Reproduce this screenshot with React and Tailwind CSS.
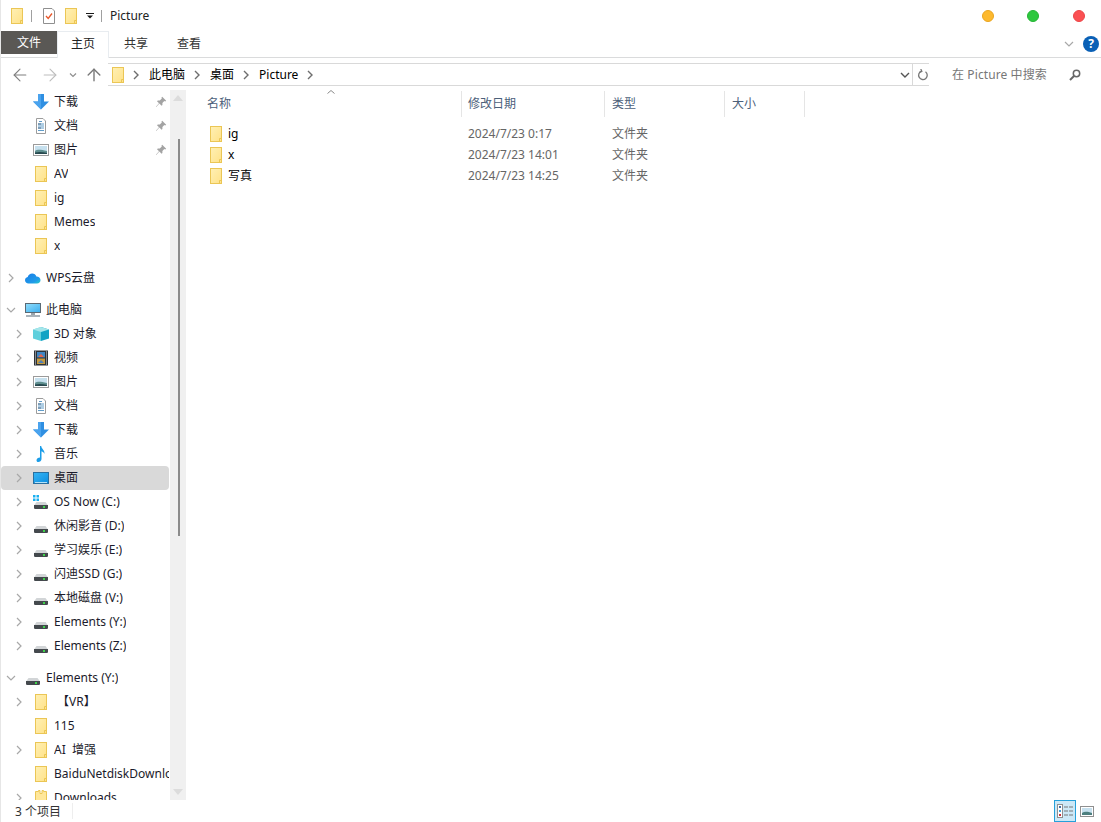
import React from 'react';
import { ArrowLeft, ArrowRight, ArrowUp } from 'lucide-react';

function Folder() {
  return (
    <svg width="12" height="16" viewBox="0 0 12 16" className="shrink-0">
      <defs>
        <linearGradient id="folderFill" x1="0" y1="0" x2="1" y2="1">
          <stop offset="0" stopColor="#fff0b4" />
          <stop offset="1" stopColor="#ffe289" />
        </linearGradient>
      </defs>
      <rect x="0.5" y="0.5" width="11" height="15" fill="url(#folderFill)" stroke="#ebc655" />
      <path d="M9.5 15.5V12.5H11.5" fill="none" stroke="#ebc655" />
    </svg>
  );
}

function OpenFolder() {
  return (
    <svg width="12" height="16" viewBox="0 0 12 16" className="shrink-0">
      <path d="M0.5 15.5V1.5H3.5V0.5H5V3.5H7V0.5H8.5V1.5H11.5V15.5Z" fill="#ffe79a" stroke="#ebc655" />
    </svg>
  );
}

function Chevron({ open, dark }) {
  return (
    <svg width="10" height="10" viewBox="0 0 10 10" fill="none" stroke={dark ? '#6e6e6e' : '#a8a8a8'} strokeWidth={dark ? 1.4 : 1.2}>
      <path d={open ? 'M1 3L5 7L9 3' : 'M3 1L7 5L3 9'} />
    </svg>
  );
}

function Pin() {
  return (
    <svg width="12" height="12" viewBox="0 0 12 12" fill="#a3a3a3">
      <path d="M7.2 0.8L11.2 4.8L10.2 5.4L9.3 5.1L7.4 7L7.4 9L6.6 9.8L4.4 7.6L1.2 11L0.9 10.7L4 7.2L2 5.2L2.8 4.4L4.8 4.4L6.8 2.5L6.5 1.6Z" />
    </svg>
  );
}

function DownloadIcon() {
  return (
    <svg width="16" height="16" viewBox="0 0 16 16">
      <path d="M5 0H11V7.5H16L8 15.5L0 7.5H5Z" fill="#2f8fe2" />
      <path d="M5 0H8V15.5L0 7.5H5Z" fill="#4aa3ee" />
    </svg>
  );
}

function DocIcon() {
  return (
    <svg width="16" height="16" viewBox="0 0 16 16" fill="none">
      <path d="M3.5 0.5H10L12.5 3V15.5H3.5Z" fill="#fff" stroke="#9c9c9c" />
      <path d="M6 3.5H9M5 6H11M5 8H11M5 10H11M5 12.5H11" stroke="#5f9cc9" />
      <path d="M5 6H8M5 10H8" stroke="#4d6f8c" />
    </svg>
  );
}

function PictureIcon() {
  return (
    <svg width="16" height="16" viewBox="0 0 16 16">
      <rect x="0.5" y="2.5" width="15" height="11" fill="#fff" stroke="#9b9b9b" />
      <rect x="2" y="4" width="12" height="8" fill="#c6e0ee" />
      <path d="M2 9C5 7 8 8 14 9V12H2Z" fill="#5f8f8f" />
      <path d="M2 10.5C6 9.5 10 10 14 11V12H2Z" fill="#27494f" />
    </svg>
  );
}

function CloudIcon() {
  return (
    <svg width="16" height="16" viewBox="0 0 16 16">
      <defs>
        <linearGradient id="cloudFill" x1="0" y1="0" x2="1" y2="1">
          <stop offset="0" stopColor="#1a7de8" />
          <stop offset="0.7" stopColor="#1f9be8" />
          <stop offset="1" stopColor="#2ad0c8" />
        </linearGradient>
      </defs>
      <path d="M3.5 13.5C1.5 13.5 0 12 0 10.2C0 8.5 1.2 7.3 2.7 7C3.3 4.8 5.2 3.5 7.2 3.5C9.2 3.5 10.8 4.8 11.4 6.4C13.8 6.4 15.5 8 15.5 10C15.5 12 14 13.5 12 13.5Z" fill="url(#cloudFill)" />
    </svg>
  );
}

function PcIcon() {
  return (
    <svg width="16" height="16" viewBox="0 0 16 16">
      <defs>
        <linearGradient id="pcFill" x1="0" y1="0" x2="1" y2="1">
          <stop offset="0" stopColor="#8fdcfb" />
          <stop offset="1" stopColor="#3fb0ef" />
        </linearGradient>
      </defs>
      <rect x="0" y="1" width="16" height="10" fill="#5a6a75" />
      <rect x="1" y="2" width="14" height="8" fill="url(#pcFill)" />
      <rect x="6" y="11" width="4" height="2" fill="#9aa5ad" />
      <rect x="1" y="13" width="14" height="2" fill="#aab3ba" />
    </svg>
  );
}

function CubeIcon() {
  return (
    <svg width="16" height="16" viewBox="0 0 16 16">
      <path d="M8 1L16 3.5V12.5L8 15Z" fill="#12a3c4" />
      <path d="M8 1L0 3.5V12.5L8 15Z" fill="#5fcfdc" />
      <path d="M8 1L16 3.5L8 6L0 3.5Z" fill="#a5e6ea" />
    </svg>
  );
}

function VideoIcon() {
  return (
    <svg width="16" height="16" viewBox="0 0 16 16">
      <rect x="1" y="0.5" width="14" height="15" fill="#2d3238" />
      <rect x="4" y="2" width="8" height="5.5" fill="#3f86c4" />
      <rect x="4" y="8.5" width="8" height="5.5" fill="#c49a3f" />
      <path d="M5 7L8 4L11 7Z" fill="#e5654b" />
      <path d="M5 13L8 10L11 13Z" fill="#4d7fbb" />
      <path d="M2 2H3M2 4H3M2 6H3M2 8H3M2 10H3M2 12H3M2 14H3M13 2H14M13 4H14M13 6H14M13 8H14M13 10H14M13 12H14M13 14H14" stroke="#dfe3e6" strokeWidth="1" />
    </svg>
  );
}

function MusicIcon() {
  return (
    <svg width="16" height="16" viewBox="0 0 16 16">
      <path d="M7 0H8.2C8.5 3 12 4 11.5 8C11 6.5 9.8 5.6 8.5 5.2V13C8.5 14.8 6.8 16 5.3 16C4 16 3.5 15 3.5 14.2C3.5 12.8 5 11.5 7 11.5Z" fill="#1b9de8" />
    </svg>
  );
}

function DesktopIcon() {
  return (
    <svg width="16" height="16" viewBox="0 0 16 16">
      <defs>
        <linearGradient id="deskFill" x1="0" y1="0" x2="1" y2="1">
          <stop offset="0" stopColor="#35b4f4" />
          <stop offset="1" stopColor="#0e8fe0" />
        </linearGradient>
      </defs>
      <rect x="0" y="2" width="16" height="12" fill="#2a6f9f" />
      <rect x="1" y="3" width="14" height="10" fill="url(#deskFill)" />
      <rect x="2" y="12" width="12" height="1" fill="#b4e2f8" />
    </svg>
  );
}

function DriveIcon({ win }) {
  return (
    <svg width="16" height="16" viewBox="0 0 16 16">
      {win && <path d="M0 1H2.5V3.5H0ZM3.5 1H6V3.5H3.5ZM0 4.5H2.5V7H0ZM3.5 4.5H6V7H3.5Z" fill="#1ab0f0" />}
      <path d="M3.5 8H12.5L15 11.5H1Z" fill="#d2d5d7" />
      <path d="M1 11H15V14.2L14.2 15H1.8L1 14.2Z" fill="#44494d" />
      <rect x="10" y="12" width="2" height="2" fill="#3ed44a" />
    </svg>
  );
}

function NavRow({ level, chevron, icon, label, pin, selected }) {
  return (
    <div className={`flex items-center h-6 shrink-0 rounded-sm ${level === 0 ? 'pl-[5px]' : 'pl-[13px]'} ${selected ? 'bg-[#d9d9d9]' : ''}`}>
      <div className="w-[10px] shrink-0">
        {chevron === 'closed' && <Chevron />}
        {chevron === 'open' && <Chevron open />}
      </div>
      <div className="w-4 ml-[9px] shrink-0 flex justify-center">{icon}</div>
      <span className="ml-[5px] overflow-hidden whitespace-pre text-[#1b1b2b]">{label}</span>
      {pin && <div className="ml-auto mr-[2px] shrink-0"><Pin /></div>}
    </div>
  );
}

function Crumb({ children }) {
  return (
    <>
      <span className="ml-px text-black">{children}</span>
      <Chevron dark />
    </>
  );
}

const files = [
  { name: 'ig', date: '2024/7/23 0:17' },
  { name: 'x', date: '2024/7/23 14:01' },
  { name: '写真', date: '2024/7/23 14:25' },
];

export default function App() {
  return (
    <div className="w-[1101px] h-[822px] flex flex-col overflow-hidden bg-white border-l border-[#e6e6e6] text-xs leading-4 text-black font-['Noto_Sans','Noto_Sans_CJK_SC',sans-serif]">
      {/* title bar */}
      <div className="h-[31px] shrink-0 flex items-center pl-[10px]">
        <Folder />
        <div className="w-px h-3 bg-[#a0a0a0] ml-2" />
        <div className="ml-[11px]">
          <svg width="12" height="16" viewBox="0 0 12 16" fill="none">
            <path d="M0.5 0.5H9L11.5 3V15.5H0.5Z" fill="#fff" stroke="#8f8f8f" />
            <path d="M3 8L5.2 10.5L9 5.5" stroke="#e8572a" strokeWidth="1.3" />
          </svg>
        </div>
        <div className="ml-[10px]"><Folder /></div>
        <div className="ml-[9px]">
          <svg width="8" height="8" viewBox="0 0 8 8" fill="#1a1a1a">
            <rect x="0" y="1" width="8" height="1" />
            <path d="M1 3.5H7L4 6.5Z" />
          </svg>
        </div>
        <div className="w-px h-3 bg-[#a0a0a0] ml-[7px]" />
        <span className="ml-2 text-[#222]">Picture</span>
        <div className="ml-auto flex items-center">
          <div className="w-3 h-3 rounded-full bg-[#fdb92e] border border-[#eaa520]" />
          <div className="w-3 h-3 rounded-full bg-[#2ec83f] border border-[#25b535] ml-[33px]" />
          <div className="w-3 h-3 rounded-full bg-[#fb5052] border border-[#ec4548] ml-[34px] mr-4" />
        </div>
      </div>

      {/* ribbon tabs */}
      <div className="h-[27px] shrink-0 flex border-b border-[#dadbdc]">
        <div className="w-14 h-[23px] bg-[#5a5855] text-white flex items-center justify-center">文件</div>
        <div className="w-[52px] h-[27px] pb-[2px] flex items-center justify-center border-x border-t border-[#e8ecf0] bg-white text-[#222]">主页</div>
        <div className="ml-[15px] h-[25px] flex items-center text-[#333]">共享</div>
        <div className="ml-[29px] h-[25px] flex items-center text-[#333]">查看</div>
        <div className="ml-auto mr-[2px] h-[25px] flex items-center">
          <Chevron open />
          <div className="ml-[9px] w-4 h-4 rounded-full bg-[#0a60b6] text-white font-bold text-[12px] flex items-center justify-center">?</div>
        </div>
      </div>

      {/* address row */}
      <div className="h-[32px] pt-px shrink-0 flex items-center">
        <div className="w-[107px] shrink-0 flex items-center pl-[9px]">
          <ArrowLeft size={20} strokeWidth={1.3} color="#7f7f7f" />
          <div className="ml-[10px]"><ArrowRight size={20} strokeWidth={1.3} color="#bdbdbd" /></div>
          <div className="ml-[9px]">
            <svg width="8" height="8" viewBox="0 0 8 8" fill="none" stroke="#8f8f8f" strokeWidth="1.2"><path d="M1 2.5L4 5.5L7 2.5" /></svg>
          </div>
          <div className="ml-[7px]"><ArrowUp size={20} strokeWidth={1.7} color="#7a7a7a" /></div>
        </div>
        <div className="w-[821px] h-[23px] flex items-center border-y border-[#d9d9d9] pl-1">
          <Folder />
          <div className="flex items-center ml-[7px] gap-[7px]">
            <Chevron dark />
            <Crumb>此电脑</Crumb>
            <Crumb>桌面</Crumb>
            <Crumb>Picture</Crumb>
          </div>
          <div className="ml-auto flex items-center h-full">
            <svg width="10" height="10" viewBox="0 0 10 10" fill="none" stroke="#555" strokeWidth="1.4"><path d="M1 3L5 7L9 3" /></svg>
            <div className="w-px h-full bg-[#d9d9d9] ml-[2px]" />
            <div className="w-4 pl-[4px]">
              <svg width="12" height="12" viewBox="0 0 12 12" fill="none" stroke="#777" strokeWidth="1.3">
                <path d="M4.5 2.2A4.3 4.3 0 1 0 8.5 2.8" />
                <path d="M3.8 0L4.8 2.3L2.5 3.3" />
              </svg>
            </div>
          </div>
        </div>
        <span className="ml-[23px] tracking-[0.1px] text-[#777]">在 Picture 中搜索</span>
        <div className="ml-[22px]">
          <svg width="12" height="12" viewBox="0 0 12 12" fill="none" stroke="#666" strokeWidth="1.5">
            <circle cx="7.5" cy="4.5" r="3.2" />
            <path d="M5 7L1 11" strokeWidth="2" />
          </svg>
        </div>
      </div>

      {/* main */}
      <div className="flex-1 min-h-0 flex">
        <div className="w-[169px] pr-px shrink-0 flex flex-col overflow-hidden">
          <NavRow level={1} icon={<DownloadIcon />} label="下载" pin />
          <NavRow level={1} icon={<DocIcon />} label="文档" pin />
          <NavRow level={1} icon={<PictureIcon />} label="图片" pin />
          <NavRow level={1} icon={<Folder />} label="AV" />
          <NavRow level={1} icon={<Folder />} label="ig" />
          <NavRow level={1} icon={<Folder />} label="Memes" />
          <NavRow level={1} icon={<Folder />} label="x" />
          <div className="h-2 shrink-0" />
          <NavRow level={0} chevron="closed" icon={<CloudIcon />} label="WPS云盘" />
          <div className="h-2 shrink-0" />
          <NavRow level={0} chevron="open" icon={<PcIcon />} label="此电脑" />
          <NavRow level={1} chevron="closed" icon={<CubeIcon />} label="3D 对象" />
          <NavRow level={1} chevron="closed" icon={<VideoIcon />} label="视频" />
          <NavRow level={1} chevron="closed" icon={<PictureIcon />} label="图片" />
          <NavRow level={1} chevron="closed" icon={<DocIcon />} label="文档" />
          <NavRow level={1} chevron="closed" icon={<DownloadIcon />} label="下载" />
          <NavRow level={1} chevron="closed" icon={<MusicIcon />} label="音乐" />
          <NavRow level={1} chevron="closed" icon={<DesktopIcon />} label="桌面" selected />
          <NavRow level={1} chevron="closed" icon={<DriveIcon win />} label="OS Now (C:)" />
          <NavRow level={1} chevron="closed" icon={<DriveIcon />} label="休闲影音 (D:)" />
          <NavRow level={1} chevron="closed" icon={<DriveIcon />} label="学习娱乐 (E:)" />
          <NavRow level={1} chevron="closed" icon={<DriveIcon />} label="闪迪SSD (G:)" />
          <NavRow level={1} chevron="closed" icon={<DriveIcon />} label="本地磁盘 (V:)" />
          <NavRow level={1} chevron="closed" icon={<DriveIcon />} label="Elements (Y:)" />
          <NavRow level={1} chevron="closed" icon={<DriveIcon />} label="Elements (Z:)" />
          <div className="h-2 shrink-0" />
          <NavRow level={0} chevron="open" icon={<DriveIcon />} label="Elements (Y:)" />
          <NavRow level={1} chevron="closed" icon={<Folder />} label=" 【VR】" />
          <NavRow level={1} icon={<Folder />} label="115" />
          <NavRow level={1} chevron="closed" icon={<Folder />} label="AI  增强" />
          <NavRow level={1} icon={<Folder />} label="BaiduNetdiskDownload" />
          <NavRow level={1} chevron="closed" icon={<OpenFolder />} label="Downloads" />
        </div>

        {/* nav scrollbar */}
        <div className="w-4 shrink-0 bg-[#f0f0f0] flex flex-col items-center">
          <svg width="10" height="6" viewBox="0 0 10 6" className="mt-[5px] shrink-0" fill="#dcdcdc"><path d="M5 0L10 6H0Z" /></svg>
          <div className="w-[2px] h-[397px] bg-[#8b8b8b] mt-[38px] ml-[1px] shrink-0" />
          <svg width="10" height="6" viewBox="0 0 10 6" className="mt-auto mb-[5px] shrink-0" fill="#dcdcdc"><path d="M5 6L10 0H0Z" /></svg>
        </div>

        {/* file list */}
        <div className="flex-1 min-w-0 text-[#666]">
          <div className="relative h-[27px] pt-px flex">
            <svg width="8" height="4" viewBox="0 0 8 4" fill="none" stroke="#8a8a8a" className="absolute left-[141px] top-0">
              <path d="M0.5 3.5L4 0.5L7.5 3.5" />
            </svg>
            <div className="w-[276px] pl-[21px] flex items-center text-[#4c607a] border-r border-[#e5e5e5]">名称</div>
            <div className="w-[143px] pl-[6px] flex items-center text-[#4c607a] border-r border-[#e5e5e5]">修改日期</div>
            <div className="w-[120px] pl-[7px] flex items-center text-[#4c607a] border-r border-[#e5e5e5]">类型</div>
            <div className="w-[80px] pl-[7px] flex items-center text-[#4c607a] border-r border-[#e5e5e5]">大小</div>
          </div>
          <div className="mt-[6px] flex flex-col">
            {files.map((f) => (
              <div key={f.name} className="h-[21px] flex items-center">
                <div className="w-[276px] pl-6 flex items-center">
                  <Folder />
                  <span className="ml-[6px] text-black">{f.name}</span>
                </div>
                <div className="w-[143px] pl-[6px]">{f.date}</div>
                <div className="w-[120px] pl-[7px]">文件夹</div>
              </div>
            ))}
          </div>
        </div>
      </div>

      {/* status bar */}
      <div className="h-[22px] shrink-0 flex items-center pl-[14px] text-[#333]">
        <span className="pt-px">3 个项目</span>
        <div className="w-px h-4 bg-[#eeeeee] ml-[11px]" />
        <div className="ml-auto flex items-center h-full pr-[7px]">
          <div className="w-[22px] h-[22px] bg-[#cce8f7] border border-[#26a0da] flex items-center justify-center">
            <svg width="16" height="14" viewBox="0 0 16 14">
              <rect x="0.5" y="0.5" width="5" height="13" fill="#fff" stroke="#8f8f8f" />
              <rect x="2" y="2" width="2" height="2" fill="#3f6fa8" />
              <rect x="2" y="6" width="2" height="2" fill="#3f9fd8" />
              <rect x="2" y="10" width="2" height="2" fill="#c8303a" />
              <path d="M7 3H11M12 3H16M7 7H11M12 7H16M7 11H11M12 11H16" stroke="#777" />
            </svg>
          </div>
          <div className="ml-1 w-[14px]">
            <svg width="14" height="11" viewBox="0 0 14 11">
              <rect x="0.5" y="0.5" width="13" height="10" fill="#fff" stroke="#8f8f8f" />
              <rect x="2" y="2" width="10" height="7" fill="#c6e0ee" />
              <path d="M2 7C5 5 8 6 12 7V9H2Z" fill="#4d7f7f" />
            </svg>
          </div>
        </div>
      </div>
    </div>
  );
}
